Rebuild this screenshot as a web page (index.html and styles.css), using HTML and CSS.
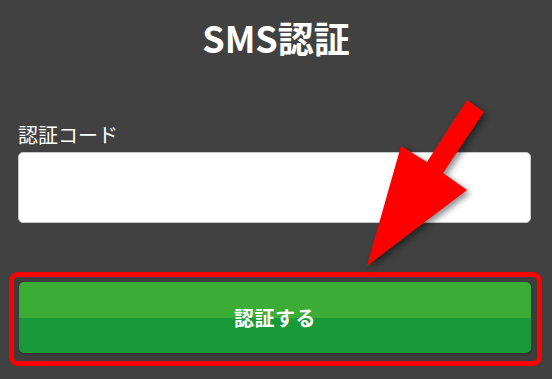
FILE: index.html
```html
<!DOCTYPE html>
<html lang="ja">
<head>
<meta charset="utf-8">
<link rel="stylesheet" href="styles.css">
</head>
<body>
<div class="page">
  <h1 class="title">SMS認証</h1>
  <form class="form">
    <label class="label" for="code">認証コード</label>
    <input class="input" id="code" type="text">
    <div class="highlight">
      <button class="btn" type="button">認証する</button>
    </div>
  </form>
  <svg class="arrow" width="552" height="379" viewBox="0 0 552 379">
    <polygon points="367,266 401,146 427,162 467,100 484,112 443,173 467,190" fill="#ff0000"/>
  </svg>
</div>
</body>
</html>
```
FILE: styles.css
```css
html, body {
  margin: 0;
  padding: 0;
  background: #414141;
}
body {
  font-family: "Noto Sans CJK JP", "Noto Sans", sans-serif;
  color: #fff;
  width: 552px;
  height: 379px;
  overflow: hidden;
}
.page {
  position: relative;
  width: 552px;
  height: 379px;
}
.title {
  margin: 0;
  padding-top: 12px;
  font-size: 36px;
  font-weight: 700;
  line-height: 50px;
  text-align: center;
}
.form {
  display: flex;
  flex-direction: column;
  margin-top: 60px;
}
.label {
  font-size: 20px;
  line-height: 26px;
  margin-left: 18px;
  margin-bottom: 0;
}
.input {
  box-sizing: border-box;
  margin: 4px 21px 0 18px;
  height: 71px;
  border: 1px solid #c8c8c8;
  border-radius: 5px;
  background: #fff;
  outline: none;
}
.highlight {
  margin: 49px 10px 0 9px;
  border: 5px solid #ff0000;
  border-radius: 9px;
  padding: 5px 6px 8px 5px;
  background: #3d3d3d;
}
.btn {
  display: block;
  width: 100%;
  height: 71px;
  border: none;
  border-radius: 5px;
  background: linear-gradient(to bottom, #3bad37 0%, #3bad37 50%, #199a39 50%, #199a39 100%);
  color: #fff;
  font-family: "Noto Sans CJK JP", "Noto Sans", sans-serif;
  font-size: 20px;
  font-weight: 700;
  letter-spacing: 0.5px;
  box-shadow: 0 1px 2px rgba(0,0,0,0.3);
}
.arrow {
  position: absolute;
  left: 0;
  top: 0;
  filter: drop-shadow(3px 3px 3px rgba(0,0,0,0.45));
  pointer-events: none;
}
```
